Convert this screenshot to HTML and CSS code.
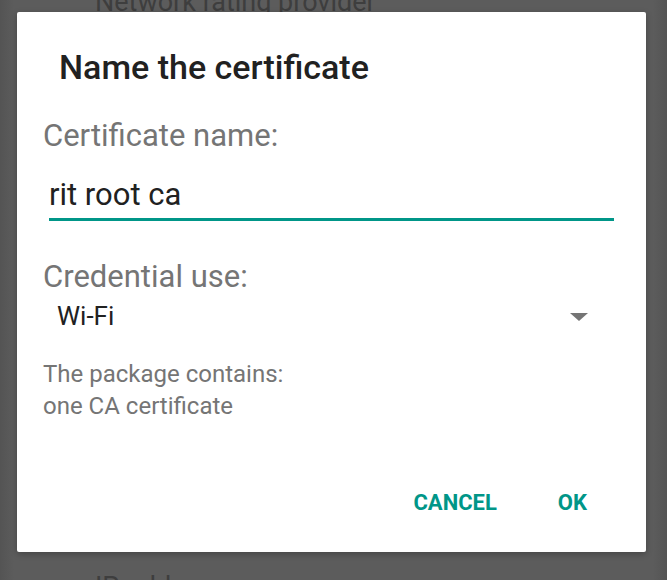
FILE: index.html
```html
<!DOCTYPE html>
<html lang="en">
<head>
<meta charset="utf-8">
<title>Name the certificate</title>
<link rel="stylesheet" href="styles.css">
</head>
<body>
<div class="screen">
  <div class="behind">
    <div class="behind-item first">Network rating provider</div>
    <div class="behind-item last">IP address</div>
  </div>
  <div class="dialog">
    <h1 class="title">Name the certificate</h1>
    <div class="content">
      <div class="label">Certificate name:</div>
      <div class="input">rit root ca</div>
      <div class="label label-use">Credential use:</div>
      <div class="select">
        <span class="select-value">Wi-Fi</span>
        <span class="caret"></span>
      </div>
      <div class="info">The package contains:<br>one CA certificate</div>
    </div>
    <div class="actions">
      <span class="btn">CANCEL</span>
      <span class="btn">OK</span>
    </div>
  </div>
</div>
</body>
</html>
```

FILE: styles.css
```css
* { box-sizing: border-box; }
html, body {
  margin: 0;
  padding: 0;
}
body {
  width: 667px;
  height: 580px;
  overflow: hidden;
  background: #5b5b5b;
  font-family: Roboto, "Noto Sans", sans-serif;
}
.screen {
  position: relative;
  width: 667px;
  height: 580px;
  overflow: hidden;
  background: linear-gradient(to right, #545454 0px, #5c5c5c 14px, #5c5c5c 653px, #545454 667px);
}
.behind {
  height: 580px;
  display: flex;
  flex-direction: column;
  justify-content: space-between;
  padding-left: 95px;
}
.behind-item {
  font-size: 27px;
  line-height: 30px;
  color: #3e3e3e;
}
.behind-item.first { margin-top: -13px; }
.behind-item.last { margin-bottom: -22px; }

.dialog {
  position: absolute;
  left: 17px;
  top: 12px;
  width: 629px;
  height: 540px;
  background: #ffffff;
  border-radius: 2px;
  box-shadow: 0 2px 6px rgba(0,0,0,0.25);
  padding-top: 35px;
  display: flex;
  flex-direction: column;
}
.title {
  margin: 0;
  padding-left: 42px;
  font-size: 34px;
  line-height: 40px;
  font-weight: 500;
  color: #212121;
}
.content {
  padding: 0 32px 0 26px;
  margin-top: 31px;
}
.label {
  font-size: 31px;
  line-height: 36px;
  color: #757575;
}
.input {
  margin-top: 24px;
  margin-left: 6px;
  font-size: 31px;
  line-height: 34px;
  color: #212121;
  padding: 0 0 6px 0;
  border-bottom: 3px solid #009688;
}
.label-use {
  margin-top: 38px;
}
.select {
  margin-top: 5px;
  padding-left: 14px;
  padding-right: 26px;
  display: flex;
  align-items: center;
  justify-content: space-between;
}
.select-value {
  font-size: 26px;
  line-height: 32px;
  color: #212121;
}
.caret {
  width: 0;
  height: 0;
  border-left: 9px solid transparent;
  border-right: 9px solid transparent;
  border-top: 8px solid #757575;
  margin-top: 2px;
}
.info {
  margin-top: 26px;
  font-size: 24px;
  line-height: 32px;
  color: #757575;
}
.actions {
  margin-top: auto;
  margin-bottom: 37px;
  padding-right: 59px;
  display: flex;
  justify-content: flex-end;
  gap: 61px;
}
.btn {
  font-size: 22px;
  line-height: 24px;
  font-weight: 700;
  color: #009688;
}
```
